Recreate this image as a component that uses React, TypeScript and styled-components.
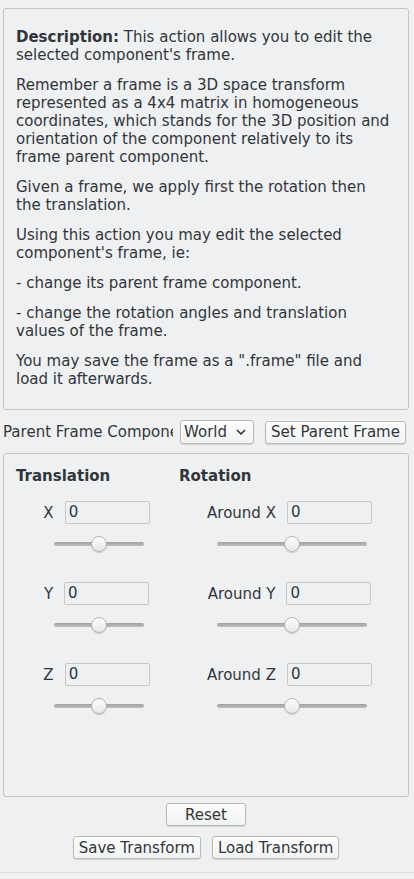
import styled, { createGlobalStyle } from "styled-components";

const GlobalStyle = createGlobalStyle`
  html, body {
    margin: 0;
    padding: 0;
    background: #eff0f1;
  }
  body {
    font-family: "DejaVu Sans", "Liberation Sans", sans-serif;
    font-size: 15px;
    color: #31363b;
  }
`;

const Page = styled.div`
  width: 414px;
  height: 879px;
  box-sizing: border-box;
  padding: 8px 5px 0 3px;
  display: flex;
  flex-direction: column;
  overflow: hidden;
`;

const Panel = styled.div<{ $height?: number }>`
  box-sizing: border-box;
  border: 1px solid #c4c5c6;
  border-radius: 3px;
  background: #eff0f1;
  flex-shrink: 0;
  ${({ $height }) => ($height ? `height: ${$height}px;` : "")}
`;

const Description = styled(Panel)`
  padding: 19px 17px 0 12px;
  line-height: 18px;
  p {
    margin: 0 0 12px 0;
  }
  b {
    font-weight: bold;
  }
`;

const ParentRow = styled.div`
  display: flex;
  align-items: center;
  height: 24px;
  margin: 10px 0 9px 0;
`;

const ParentLabel = styled.div`
  width: 170px;
  white-space: nowrap;
  overflow: hidden;
  flex-shrink: 0;
`;

const Button = styled.button<{ $width?: number }>`
  font-family: inherit;
  font-size: 15px;
  color: #31363b;
  height: 23px;
  padding: 0 5px;
  box-sizing: border-box;
  ${({ $width }) => ($width ? `width: ${$width}px;` : "")}
  border: 1px solid #b8b9ba;
  border-radius: 3px;
  background: linear-gradient(#fcfcfc, #f1f2f3);
  box-shadow: 0 1px 1px rgba(0, 0, 0, 0.12);
  line-height: 20px;
  white-space: nowrap;
`;

const SelectBox = styled.div`
  margin-left: 7px;
  width: 74px;
  height: 24px;
  box-sizing: border-box;
  border: 1px solid #b8b9ba;
  border-radius: 3px;
  background: linear-gradient(#fcfcfc, #f1f2f3);
  box-shadow: 0 1px 1px rgba(0, 0, 0, 0.12);
  display: flex;
  align-items: center;
  justify-content: space-between;
  padding: 0 7px 0 3px;
  color: #31363b;
`;

const SetButton = styled(Button)`
  margin-left: 11px;
`;

const Transform = styled(Panel)`
  padding: 11px 12px 0 12px;
  display: flex;
  gap: 2px;
`;

const Column = styled.div<{ $width: number }>`
  width: ${({ $width }) => $width}px;
  flex-shrink: 0;
  display: flex;
  flex-direction: column;
`;

const Heading = styled.div`
  font-weight: bold;
  height: 22px;
  line-height: 22px;
  margin-bottom: 14px;
`;

const Field = styled.div`
  display: flex;
  flex-direction: column;
  align-items: center;
  height: 81px;
`;

const FieldRow = styled.div`
  display: flex;
  align-items: center;
  gap: 11px;
`;

const ValueInput = styled.div`
  width: 85px;
  height: 23px;
  box-sizing: border-box;
  border: 1px solid #c6c7c8;
  border-radius: 2px;
  background: #eff0f1;
  padding: 0 3px;
  line-height: 21px;
`;

const Slider = styled.div<{ $width: number }>`
  position: relative;
  width: ${({ $width }) => $width}px;
  height: 18px;
  margin: 11px 0 0 4px;
  &::before {
    content: "";
    position: absolute;
    left: 0;
    right: 0;
    top: 7px;
    height: 4px;
    border-radius: 2px;
    background: linear-gradient(#9fa1a3, #bcbec0);
  }
`;

const Thumb = styled.div`
  position: absolute;
  top: 1px;
  width: 16px;
  height: 16px;
  margin-left: -8px;
  box-sizing: border-box;
  border-radius: 50%;
  border: 1px solid #b4b5b6;
  background: linear-gradient(#fdfdfd, #e6e7e8);
  box-shadow: 0 1px 1px rgba(0, 0, 0, 0.15);
`;

const Footer = styled.div`
  display: flex;
  flex-direction: column;
  align-items: center;
  gap: 10px;
  margin-top: 6px;
`;

const ButtonRow = styled.div`
  display: flex;
  gap: 11px;
`;

const Divider = styled.div`
  margin: 13px -5px 0 -3px;
  height: 1px;
  background: #dcdddf;
`;

const Chevron = () => (
  <svg width="10" height="6" viewBox="0 0 10 6">
    <path d="M1 1 L5 5 L9 1" fill="none" stroke="#31363b" strokeWidth="1.6" />
  </svg>
);

const ValueField = ({ label, sliderWidth }: { label: string; sliderWidth: number }) => (
  <Field>
    <FieldRow>
      <span>{label}</span>
      <ValueInput>0</ValueInput>
    </FieldRow>
    <Slider $width={sliderWidth}>
      <Thumb style={{ left: "50%" }} />
    </Slider>
  </Field>
);

export default function App() {
  return (
    <>
      <GlobalStyle />
      <Page>
        <Description $height={402}>
          <p>
            <b>Description:</b> This action allows you to edit the selected component's frame.
          </p>
          <p>
            Remember a frame is a 3D space transform represented as a 4x4 matrix in homogeneous
            coordinates, which stands for the 3D position and orientation of the component
            relatively to its frame parent component.
          </p>
          <p>Given a frame, we apply first the rotation then the translation.</p>
          <p>Using this action you may edit the selected component's frame, ie:</p>
          <p>- change its parent frame component.</p>
          <p>- change the rotation angles and translation values of the frame.</p>
          <p>You may save the frame as a ".frame" file and load it afterwards.</p>
        </Description>
        <ParentRow>
          <ParentLabel>Parent Frame Component</ParentLabel>
          <SelectBox>
            <span>World</span>
            <Chevron />
          </SelectBox>
          <SetButton>Set Parent Frame</SetButton>
        </ParentRow>
        <Transform $height={344}>
          <Column $width={161}>
            <Heading>Translation</Heading>
            <ValueField label="X" sliderWidth={90} />
            <ValueField label="Y" sliderWidth={90} />
            <ValueField label="Z" sliderWidth={90} />
          </Column>
          <Column $width={221}>
            <Heading>Rotation</Heading>
            <ValueField label="Around X" sliderWidth={150} />
            <ValueField label="Around Y" sliderWidth={150} />
            <ValueField label="Around Z" sliderWidth={150} />
          </Column>
        </Transform>
        <Footer>
          <Button $width={80}>Reset</Button>
          <ButtonRow>
            <Button>Save Transform</Button>
            <Button>Load Transform</Button>
          </ButtonRow>
        </Footer>
        <Divider />
      </Page>
    </>
  );
}
